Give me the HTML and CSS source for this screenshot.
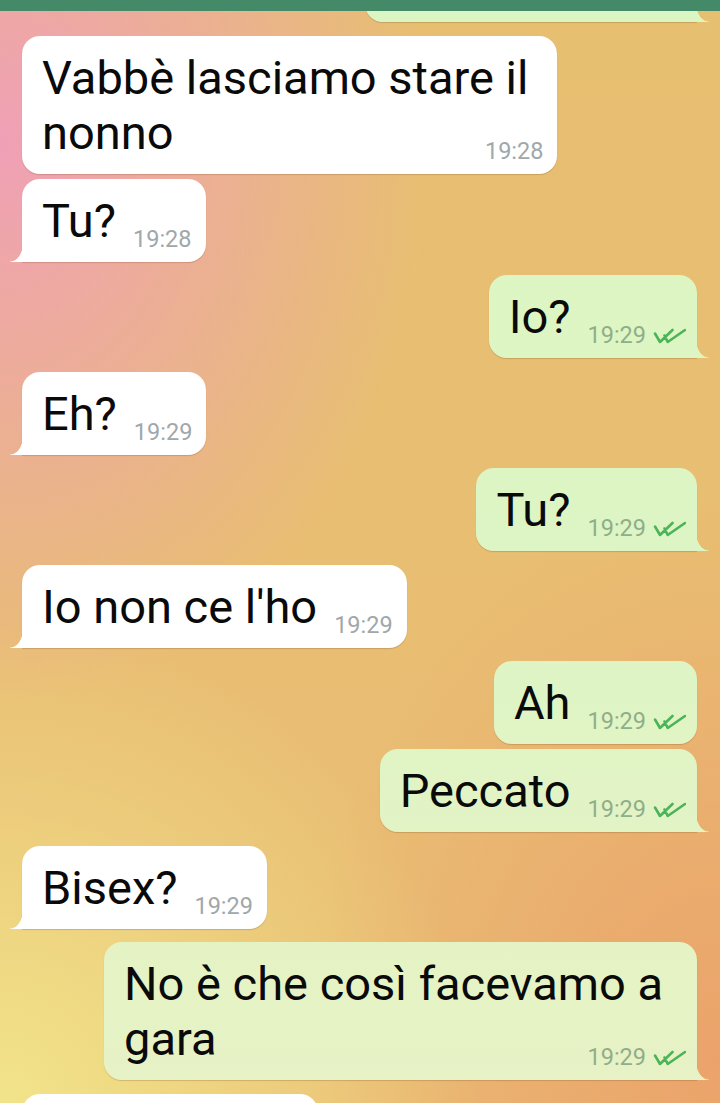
FILE: index.html
```html
<!DOCTYPE html>
<html lang="it">
<head>
<meta charset="utf-8">
<title>Chat</title>
<link rel="stylesheet" href="styles.css">
</head>
<body>
<div class="screen">
  <div class="topbar"></div>
  <main class="chat">
    <div class="msg out tail ghost"></div>

    <div class="msg in multi grp">
      <div class="text">Vabbè lasciamo stare il<br>nonno</div>
      <div class="meta"><span class="time">19:28</span></div>
    </div>
    <div class="msg in tail same">
      <div class="text">Tu?</div>
      <div class="meta"><span class="time">19:28</span></div>
    </div>

    <div class="msg out tail grp">
      <div class="text">Io?</div>
      <div class="meta"><span class="time">19:29</span><svg class="checks" viewBox="0 0 34 18" width="34" height="18"><path d="M3 7.5L8 16L20.5 4M12.5 9.5L15.7 16L33 4"/></svg></div>
    </div>

    <div class="msg in tail grp">
      <div class="text">Eh?</div>
      <div class="meta"><span class="time">19:29</span></div>
    </div>

    <div class="msg out tail grp">
      <div class="text">Tu?</div>
      <div class="meta"><span class="time">19:29</span><svg class="checks" viewBox="0 0 34 18" width="34" height="18"><path d="M3 7.5L8 16L20.5 4M12.5 9.5L15.7 16L33 4"/></svg></div>
    </div>

    <div class="msg in tail grp">
      <div class="text">Io non ce l'ho</div>
      <div class="meta"><span class="time">19:29</span></div>
    </div>

    <div class="msg out grp">
      <div class="text">Ah</div>
      <div class="meta"><span class="time">19:29</span><svg class="checks" viewBox="0 0 34 18" width="34" height="18"><path d="M3 7.5L8 16L20.5 4M12.5 9.5L15.7 16L33 4"/></svg></div>
    </div>
    <div class="msg out tail same">
      <div class="text">Peccato</div>
      <div class="meta"><span class="time">19:29</span><svg class="checks" viewBox="0 0 34 18" width="34" height="18"><path d="M3 7.5L8 16L20.5 4M12.5 9.5L15.7 16L33 4"/></svg></div>
    </div>

    <div class="msg in tail grp">
      <div class="text">Bisex?</div>
      <div class="meta"><span class="time">19:29</span></div>
    </div>

    <div class="msg out tail multi grp">
      <div class="text">No è che così facevamo a<br>gara</div>
      <div class="meta"><span class="time">19:29</span><svg class="checks" viewBox="0 0 34 18" width="34" height="18"><path d="M3 7.5L8 16L20.5 4M12.5 9.5L15.7 16L33 4"/></svg></div>
    </div>

    <div class="msg in ghost-bottom grp"></div>
  </main>
</div>
</body>
</html>
```

FILE: styles.css
```css
* { box-sizing: border-box; }

html, body {
  margin: 0;
  padding: 0;
}

body {
  font-family: Roboto, "Noto Sans", "Liberation Sans", sans-serif;
  color: #0a0a0a;
}

.screen {
  width: 720px;
  height: 1103px;
  overflow: hidden;
  background:
    radial-gradient(ellipse 430px 560px at 0% 13%, rgba(240, 160, 182, 1), rgba(240, 160, 182, 0)),
    radial-gradient(ellipse 480px 480px at 0% 100%, rgba(242, 228, 138, 1), rgba(242, 228, 138, 0)),
    radial-gradient(ellipse 420px 560px at 100% 96%, rgba(235, 163, 107, 1), rgba(235, 163, 107, 0)),
    linear-gradient(180deg, #e7bf71 0%, #e9bd74 100%);
}

.topbar {
  position: relative;
  z-index: 2;
  height: 11px;
  background: #448a68;
}

.chat {
  display: flex;
  flex-direction: column;
  padding: 0 23px 0 22px;
  margin-top: -72px;
}

.msg {
  position: relative;
  display: flex;
  align-items: flex-end;
  padding: 14px 14px 14px 20px;
  border-radius: 18px;
  box-shadow: 0 1px 1px rgba(90, 60, 20, 0.22);
}

.msg.grp { margin-top: 13.5px; }
.msg.same { margin-top: 5px; }

.msg.in {
  align-self: flex-start;
  background: #ffffff;
}

.msg.out {
  align-self: flex-end;
  padding-right: 11px;
  background: linear-gradient(180deg, #dcf6c3 0px, #ddf5c4 560px, #e7f2c5 1103px) fixed;
}

.msg.in.tail { border-bottom-left-radius: 0; }
.msg.out.tail { border-bottom-right-radius: 0; }

.msg.tail::after {
  content: "";
  position: absolute;
  bottom: 0;
  width: 13px;
  height: 18px;
}

.msg.in.tail::after {
  left: -12px;
  background: radial-gradient(ellipse 13px 18px at 0 0, rgba(255, 255, 255, 0) 95%, #ffffff 100%);
}

.msg.out.tail::after {
  right: -12px;
  background: inherit;
  -webkit-mask-image: radial-gradient(ellipse 13px 18px at 100% 0, transparent 95%, #000 100%);
  mask-image: radial-gradient(ellipse 13px 18px at 100% 0, transparent 95%, #000 100%);
}

.text {
  font-size: 47px;
  line-height: 55px;
  white-space: nowrap;
}

.meta {
  display: flex;
  align-items: center;
  gap: 6px;
  margin-left: 17px;
  margin-bottom: -3px;
  flex-shrink: 0;
}

.time {
  font-size: 23.5px;
  line-height: 24px;
  color: #a0a8aa;
}

.out .time { color: #8fae8a; }

.checks {
  display: block;
  fill: none;
  stroke: #4cb458;
  stroke-width: 2.6;
  stroke-linecap: round;
  stroke-linejoin: round;
}

.msg.multi {
  flex-direction: column;
  align-items: stretch;
}

.msg.multi .text { padding-right: 15px; }
.msg.out.multi .text { padding-right: 23px; }

.msg.multi .meta {
  align-self: flex-end;
  margin-top: -21px;
  margin-left: 0;
}

.ghost {
  width: 332px;
  height: 83px;
}

.ghost-bottom {
  width: 296px;
  height: 83px;
}
```
